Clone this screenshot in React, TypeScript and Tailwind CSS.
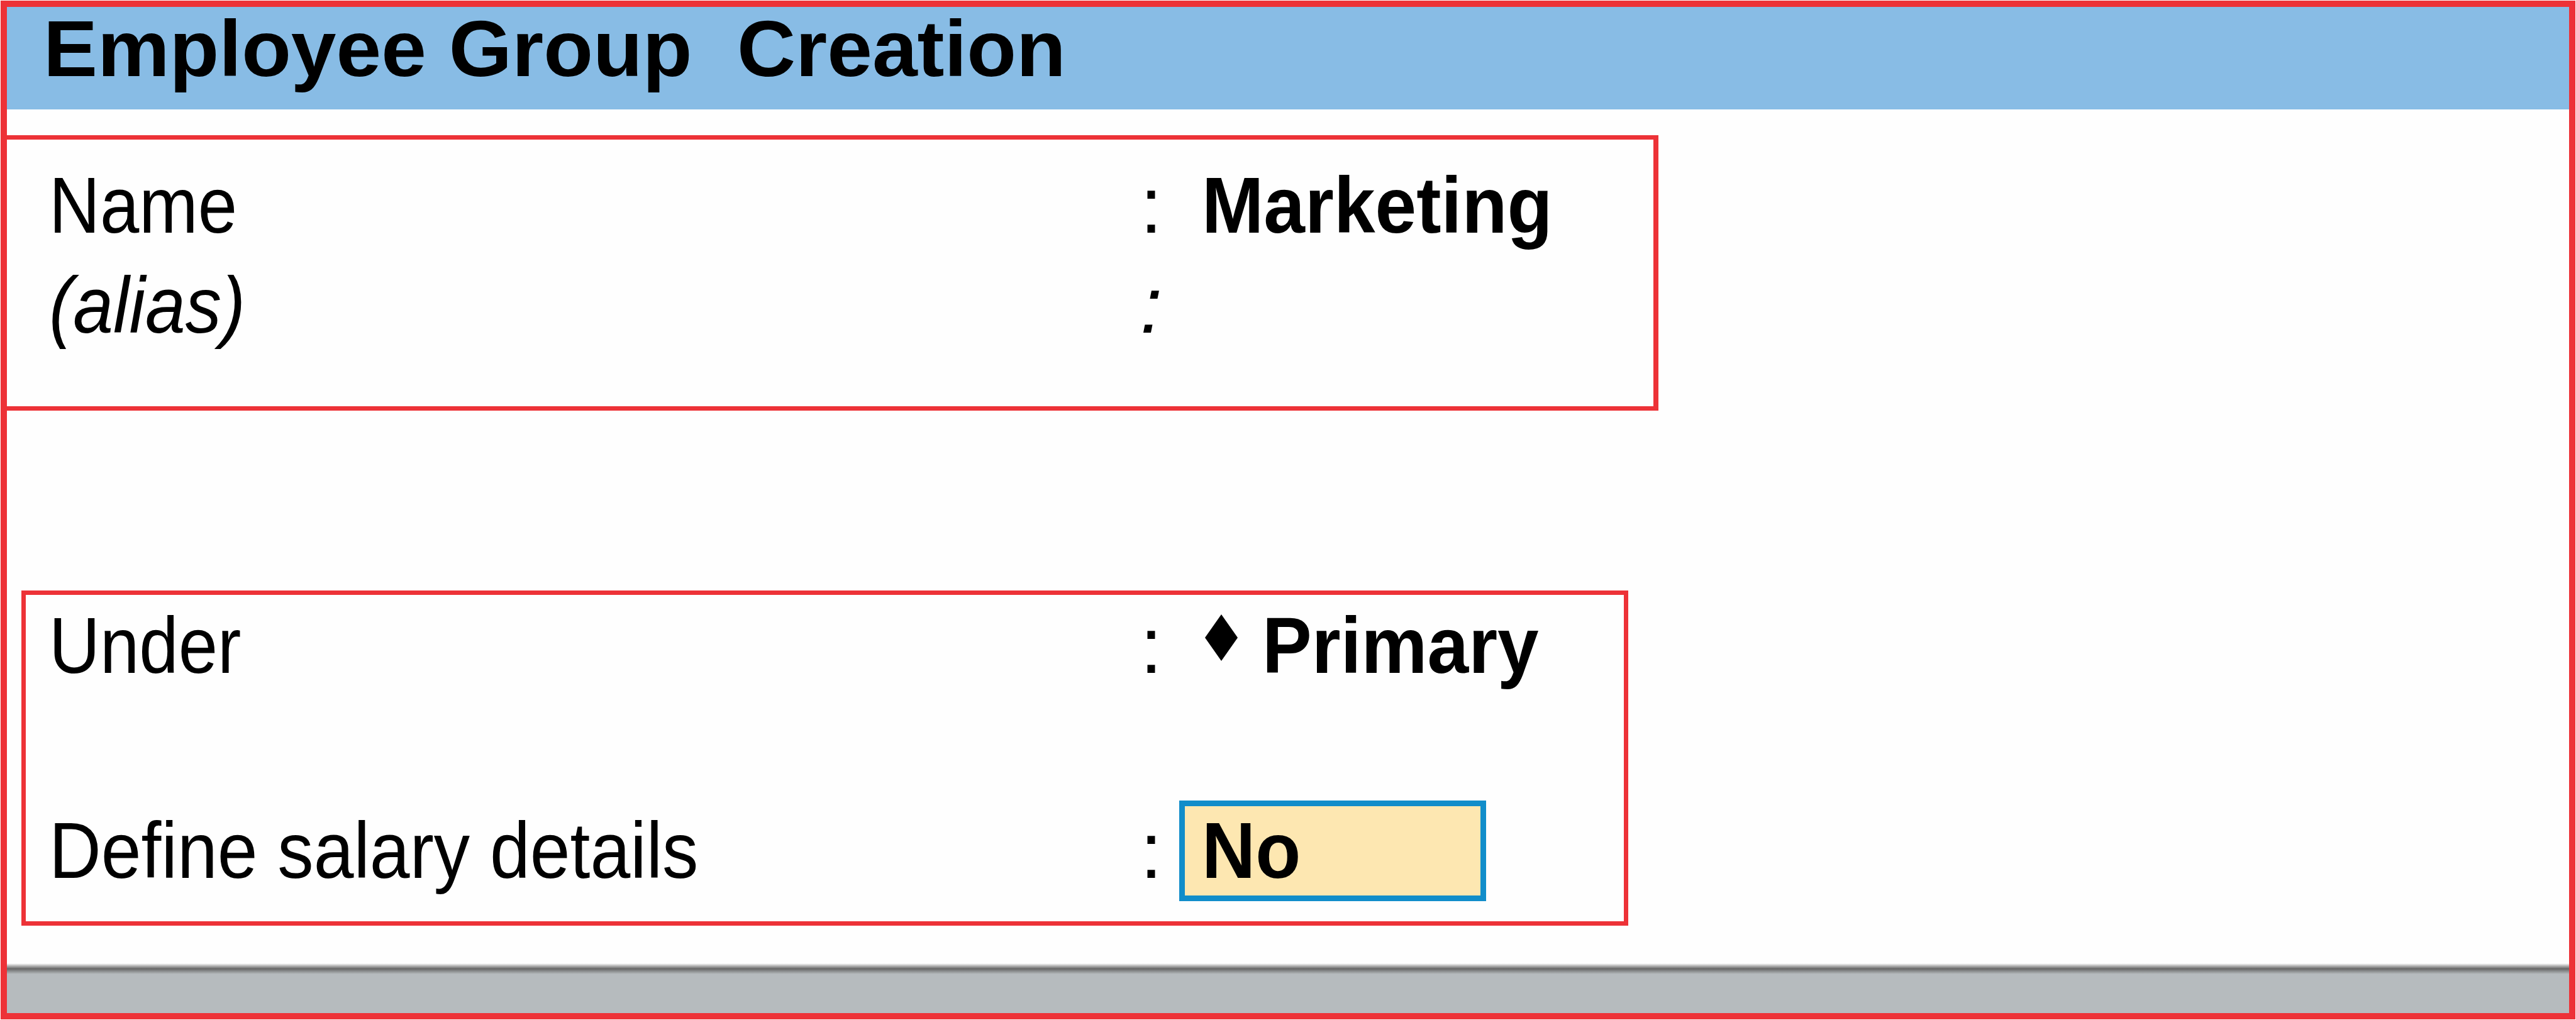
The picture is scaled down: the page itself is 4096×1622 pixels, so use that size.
import type { ReactNode } from "react";
import { clsx } from "clsx";

type RowProps = {
  label: string;
  labelScale?: string;
  italic?: boolean;
  children?: ReactNode;
};

function Row({ label, labelScale = "scale-x-[0.91]", italic, children }: RowProps) {
  return (
    <div className={clsx("flex h-[159px] items-center whitespace-nowrap", italic && "italic")}>
      <div className="w-[1735px] shrink-0">
        <span className={clsx("inline-block origin-left", labelScale)}>{label}</span>
      </div>
      <div className="w-[98px] shrink-0">:</div>
      {children}
    </div>
  );
}

function Value({ children }: { children: ReactNode }) {
  return <span className="inline-block origin-left scale-x-[0.937] font-bold">{children}</span>;
}

export default function App() {
  return (
    <div className="h-[1622px] w-[4096px] overflow-hidden bg-[#fefefe] p-px font-['Liberation_Sans',Arial,sans-serif] text-[126px] leading-[159px] text-black">
      <div className="flex h-full flex-col border-[10px] border-[#ed3237]">
        <header className="flex h-[163px] shrink-0 items-start bg-[#88bce5] pl-[58px]">
          <h1 className="origin-left scale-x-[1.023] font-bold leading-[134px] whitespace-pre">
            {"Employee Group  Creation"}
          </h1>
        </header>

        {/* Name and alias */}
        <section className="mt-[41px] h-[438px] w-[2626px] shrink-0 border-y-[7px] border-r-[8px] border-[#ed3237] pt-[25px] pl-[67px]">
          <Row label="Name" labelScale="scale-x-[0.89]">
            <Value>Marketing</Value>
          </Row>
          <Row label="(alias)" italic />
        </section>

        {/* Parent group and salary flag */}
        <section className="mt-[286px] ml-[23px] flex h-[533px] w-[2555px] shrink-0 flex-col gap-[167px] border-[7px] border-[#ed3237] pt-px pl-[37px]">
          <Row label="Under" labelScale="scale-x-[0.89]">
            <svg viewBox="0 0 52 74" className="mr-[39px] mb-[26px] ml-[5px] h-[74px] w-[52px] shrink-0">
              <path d="M26 0 52 37 26 74 0 37Z" fill="currentColor" />
            </svg>
            <Value>Primary</Value>
          </Row>
          <Row label="Define salary details">
            <div className="-ml-[36px] flex h-[160px] w-[488px] shrink-0 items-center border-[9px] border-[#118dca] bg-[#fde7b1] pl-[27px]">
              <Value>No</Value>
            </div>
          </Row>
        </section>

        <footer className="mt-auto h-[79px] shrink-0 bg-[#b6bbbe]">
          <div className="h-[17px] bg-linear-to-b from-[#fefefe] via-[#686868] to-[#b6bbbe]" />
        </footer>
      </div>
    </div>
  );
}
